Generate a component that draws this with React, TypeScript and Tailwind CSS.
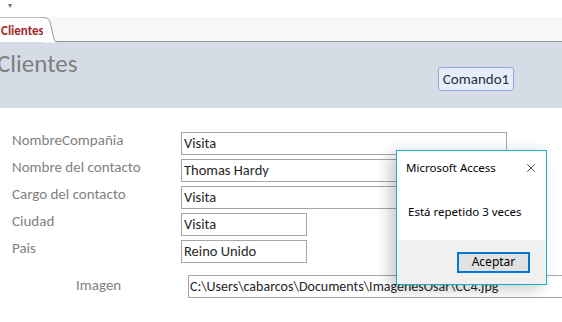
import { X } from "lucide-react"

const fields = [
  { label: "NombreCompañia", value: "Visita", wide: true },
  { label: "Nombre del contacto", value: "Thomas Hardy", wide: true },
  { label: "Cargo del contacto", value: "Visita", wide: true },
  { label: "Ciudad", value: "Visita", wide: false },
  { label: "Pais", value: "Reino Unido", wide: false },
]

const calibri = { fontFamily: "Carlito, Lato, 'Open Sans', sans-serif" }

export default function App() {
  return (
    <div className="relative w-[562px] h-[322px] overflow-hidden bg-white" style={calibri}>
      {/* top strip */}
      <div className="h-[17px] relative">
        <span className="absolute left-[8px] top-[1px] text-[8px] leading-none text-gray-500">▾</span>
      </div>

      {/* tab strip */}
      <div className="h-[25px] bg-[#f7f7f7] border-b border-[#9a9a9a] flex items-end">
        <div className="relative h-[25px] w-[44px] bg-white border-t border-[#b9b9b9] flex items-center -mb-px">
          <span className="text-[13px] font-semibold text-[#a4262c] leading-none pl-[1px]">Clientes</span>
          <svg className="absolute left-[43px] top-[-1px]" width="14" height="26" viewBox="0 0 14 26">
            <path d="M0 0.5 Q6 0.5 7 5 L11 22 Q12 25 14 25.5 L0 25.5 Z" fill="white" />
            <path d="M0 0.5 Q6 0.5 7 5 L11 22 Q12 25 14 25.5" fill="none" stroke="#9a9a9a" />
          </svg>
        </div>
      </div>

      {/* header */}
      <div className="h-[66px] bg-[#d6dce5] flex justify-between">
        <div className="text-[25px] text-[#7f7f7f] leading-none -ml-[3px] mt-[9px]">Clientes</div>
        <div className="mt-[25px] mr-[48px]">
          <div className="w-[76px] h-[24px] rounded-[3px] border border-[#8eaadb] bg-[#e6eefc] flex items-center justify-center text-[15px] text-[#1f3044]">
            Comando1
          </div>
        </div>
      </div>

      {/* form */}
      <div className="pt-[24px] flex flex-col gap-[4px]">
        {fields.map(f => (
          <div key={f.label} className="flex items-center h-[23px]">
            <div className="w-[181px] pl-[12px] text-[15px] text-[#7f7f7f] leading-none -mt-[6px]">{f.label}</div>
            <div
              className={`${f.wide ? "w-[326px]" : "w-[126px]"} h-[23px] border border-[#a6a6a6] flex items-center pl-[2px] text-[14.5px] text-[#262626] leading-none`}
            >
              {f.value}
            </div>
          </div>
        ))}
        <div className="flex items-center h-[23px] mt-[8px]">
          <div className="w-[188px] pl-[76px] text-[15px] text-[#7f7f7f] leading-none -mt-[3px]">Imagen</div>
          <div className="flex-1 h-[23px] border border-[#a6a6a6] border-r-0 flex items-center pl-[1px] text-[14px] text-[#262626] leading-none whitespace-nowrap overflow-hidden">
            C:\Users\cabarcos\Documents\ImagenesOsar\CC4.jpg
          </div>
        </div>
      </div>

      {/* message box */}
      <div
        className="absolute left-[396px] top-[150px] w-[151px] h-[135px] border border-[#17b0c8] bg-white flex flex-col shadow-[-6px_4px_14px_rgba(0,0,0,0.22)]"
        style={{ fontFamily: "'Noto Sans', 'Open Sans', sans-serif" }}
      >
        <div className="h-[33px] flex items-center justify-between pl-[9px] pr-[8px]">
          <span className="text-[11.5px] text-black">Microsoft Access</span>
          <X size={14} strokeWidth={1.2} className="text-black" />
        </div>
        <div className="flex-1 pl-[11px] pt-[22px] text-[11.5px] text-black leading-none">Está repetido 3 veces</div>
        <div className="h-[44px] bg-[#f0f0f0] flex items-center justify-end pr-[16px]">
          <div className="w-[73px] h-[21px] border-2 border-[#0078d7] bg-[#e1e1e1] flex items-center justify-center text-[12px] text-black">
            Aceptar
          </div>
        </div>
      </div>
    </div>
  )
}
